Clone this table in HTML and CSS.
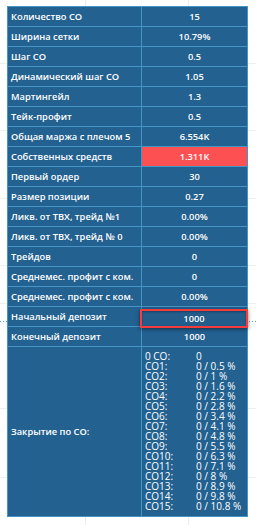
FILE: index.html
```html
<!DOCTYPE html>
<html lang="ru">
<head>
<meta charset="utf-8">
<link rel="stylesheet" href="styles.css">
</head>
<body>
<div class="page">
<table class="stats">
<tr><td class="lbl">Количество СО</td><td class="val">15</td></tr>
<tr><td class="lbl">Ширина сетки</td><td class="val">10.79%</td></tr>
<tr><td class="lbl">Шаг СО</td><td class="val">0.5</td></tr>
<tr><td class="lbl">Динамический шаг СО</td><td class="val">1.05</td></tr>
<tr><td class="lbl">Мартингейл</td><td class="val">1.3</td></tr>
<tr><td class="lbl">Тейк-профит</td><td class="val">0.5</td></tr>
<tr><td class="lbl">Общая маржа с плечом 5</td><td class="val">6.554K</td></tr>
<tr><td class="lbl">Собственных средств</td><td class="val red">1.311K</td></tr>
<tr><td class="lbl">Первый ордер</td><td class="val">30</td></tr>
<tr><td class="lbl">Размер позиции</td><td class="val">0.27</td></tr>
<tr><td class="lbl">Ликв. от ТВХ, трейд №1</td><td class="val">0.00%</td></tr>
<tr><td class="lbl">Ликв. от ТВХ, трейд № 0</td><td class="val">0.00%</td></tr>
<tr><td class="lbl">Трейдов</td><td class="val">0</td></tr>
<tr><td class="lbl">Среднемес. профит с ком.</td><td class="val">0</td></tr>
<tr><td class="lbl">Среднемес. профит с ком.</td><td class="val">0.00%</td></tr>
<tr><td class="lbl">Начальный депозит</td><td class="val input-cell"><div class="input">1000</div></td></tr>
<tr><td class="lbl">Конечный депозит</td><td class="val">1000</td></tr>
<tr class="tall"><td class="lbl">Закрытие по СО:</td><td class="list-cell">
<div class="co-list">
<span>0 CO:</span><span>0</span>
<span>CO1:</span><span>0 / 0.5 %</span>
<span>CO2:</span><span>0 / 1 %</span>
<span>CO3:</span><span>0 / 1.6 %</span>
<span>CO4:</span><span>0 / 2.2 %</span>
<span>CO5:</span><span>0 / 2.8 %</span>
<span>CO6:</span><span>0 / 3.4 %</span>
<span>CO7:</span><span>0 / 4.1 %</span>
<span>CO8:</span><span>0 / 4.8 %</span>
<span>CO9:</span><span>0 / 5.5 %</span>
<span>CO10:</span><span>0 / 6.3 %</span>
<span>CO11:</span><span>0 / 7.1 %</span>
<span>CO12:</span><span>0 / 8 %</span>
<span>CO13:</span><span>0 / 8.9 %</span>
<span>CO14:</span><span>0 / 9.8 %</span>
<span>CO15:</span><span>0 / 10.8 %</span>
</div>
</td></tr>
</table>
</div>
</body>
</html>
```
FILE: styles.css
```css
html, body {
  margin: 0;
  padding: 0;
}
body {
  width: 256px;
  height: 525px;
  background-color: #fff;
  background-image:
    linear-gradient(to right, transparent 85px, #ececec 85px, #ececec 86px, transparent 86px, transparent 188px, #ececec 188px, #ececec 189px, transparent 189px),
    linear-gradient(to bottom, transparent 63px, #efefef 63px, #efefef 64px, transparent 64px, transparent 130px, #efefef 130px, #efefef 131px, transparent 131px, transparent 198px, #efefef 198px, #efefef 199px, transparent 199px, transparent 265px, #efefef 265px, #efefef 266px, transparent 266px, transparent 303px, #efefef 303px, #efefef 304px, transparent 304px, transparent 408px, #efefef 408px, #efefef 409px, transparent 409px, transparent 477px, #efefef 477px, #efefef 478px, transparent 478px),
    repeating-linear-gradient(to right, #5aa6a0 0 1px, transparent 1px 3px);
  background-size: 100% 100%, 100% 100%, 100% 1px;
  background-position: 0 0, 0 0, 0 321px;
  background-repeat: no-repeat;
  font-family: "Open Sans", "Noto Sans", sans-serif;
  color: #fff;
}
.page {
  padding: 6px 8px 0 7px;
}
.stats {
  border-collapse: collapse;
  width: 241px;
  table-layout: fixed;
  background: #236191;
}
.stats td {
  border: 1px solid #4595c8;
  height: 19px;
  padding: 0;
  font-size: 9.3px;
  font-weight: 600;
  line-height: 12px;
  white-space: nowrap;
}
.lbl {
  width: 130px;
  padding-left: 3px !important;
}
.val {
  text-align: center;
}
.red {
  background: #fd5052;
}
.input-cell {
  position: relative;
}
.input {
  position: absolute;
  left: -2px;
  right: -1px;
  top: 2px;
  height: 15px;
  border: 2px solid #f53b3b;
  background: #225d8b;
  box-shadow: 0 1px 4px rgba(0,0,0,0.55), inset 0 1px 2px rgba(0,0,0,0.3);
  line-height: 15px;
  text-align: center;
  font-weight: 600;
  font-size: 9.3px;
}
.tall td {
  height: 169px;
}
.list-cell {
  padding: 0 0 0 3px !important;
  vertical-align: top;
}
.co-list {
  display: grid;
  grid-template-columns: 51px auto;
  padding-top: 4px;
  font-size: 10px;
  font-weight: 400;
  line-height: 10px;
}
```
